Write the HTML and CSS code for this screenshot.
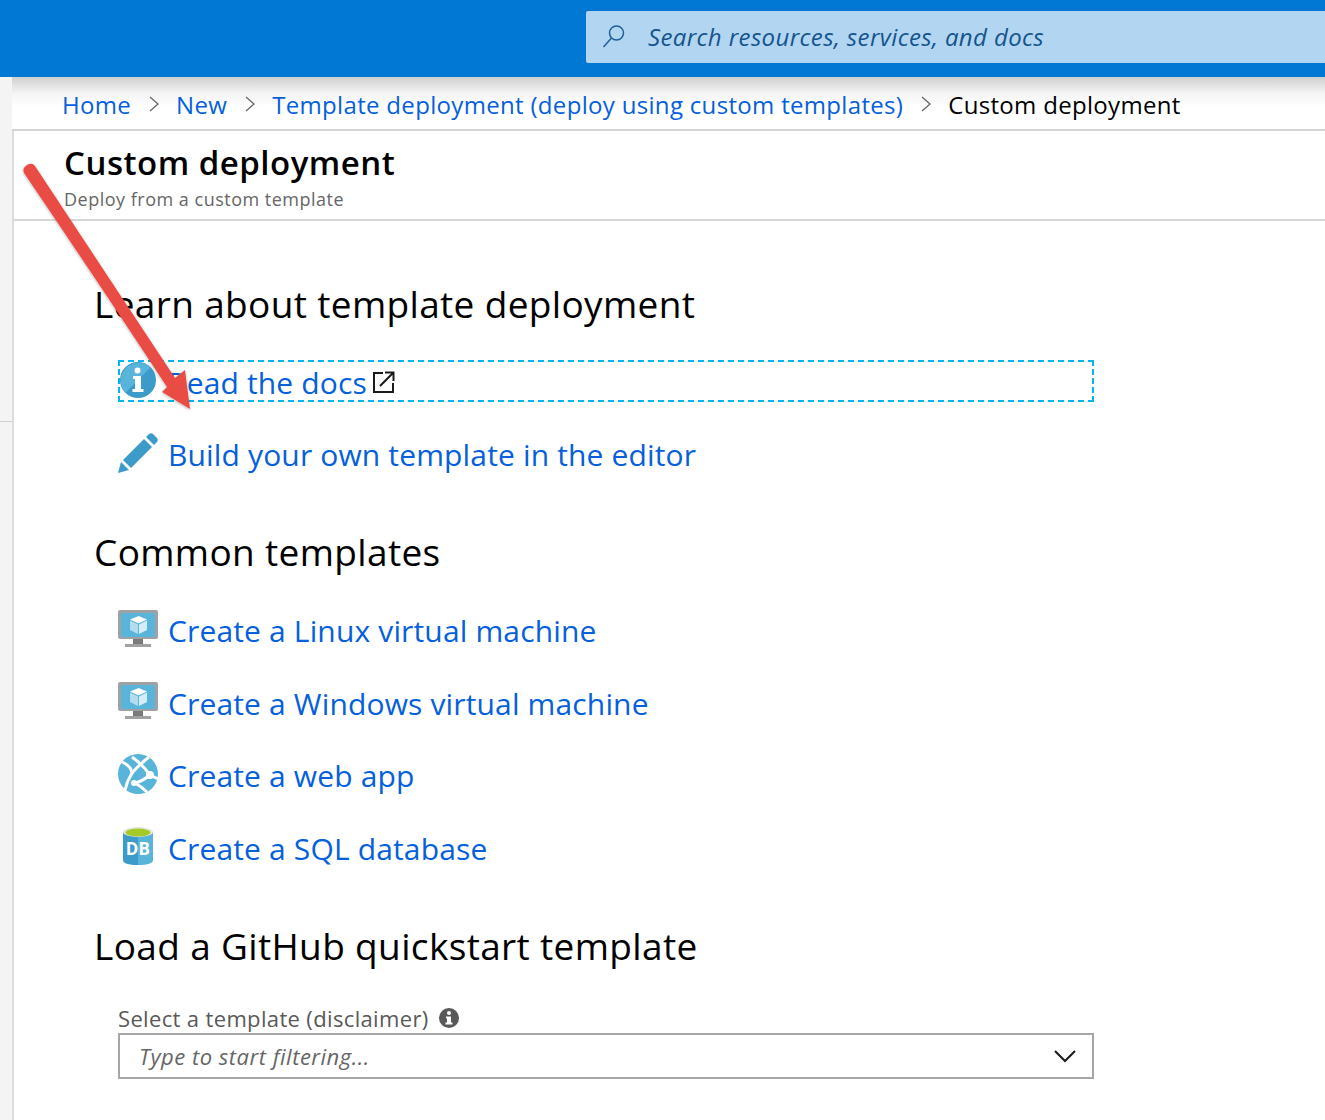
FILE: index.html
```html
<!DOCTYPE html>
<html lang="en">
<head>
    <meta charset="UTF-8">
    <meta name="viewport" content="width=device-width, initial-scale=1.0">
    <title>Custom deployment</title>
    <link rel="stylesheet" href="styles.css">
</head>
<body>
    <header class="topbar">
        <div class="search">
            <svg class="search-icon" width="26" height="26" viewBox="0 0 26 26">
                <circle cx="15.5" cy="10" r="7" fill="none" stroke="#1f5f96" stroke-width="1.5"/>
                <path d="M10.5 15 L2.5 24" fill="none" stroke="#1f5f96" stroke-width="1.5"/>
            </svg>
            <span class="search-text">Search resources, services, and docs</span>
        </div>
    </header>

    <div class="shell">
        <div class="gutter"><div class="gutter-top"></div></div>
        <div class="page">
            <nav class="crumbs">
                <a href="#">Home</a>
                <svg class="chev" width="12" height="18" viewBox="0 0 12 18"><path d="M2 2 L10 9 L2 16" fill="none" stroke="#666" stroke-width="1.3"/></svg>
                <a href="#">New</a>
                <svg class="chev" width="12" height="18" viewBox="0 0 12 18"><path d="M2 2 L10 9 L2 16" fill="none" stroke="#666" stroke-width="1.3"/></svg>
                <a href="#">Template deployment (deploy using custom templates)</a>
                <svg class="chev" width="12" height="18" viewBox="0 0 12 18"><path d="M2 2 L10 9 L2 16" fill="none" stroke="#666" stroke-width="1.3"/></svg>
                <span>Custom deployment</span>
            </nav>

            <div class="title-block">
                <h1>Custom deployment</h1>
                <p>Deploy from a custom template</p>
            </div>

            <main class="content">
                <h2 class="first">Learn about template deployment</h2>
                <a class="row focused" href="#">
                    <svg class="icon" width="40" height="40" viewBox="0 0 40 40">
                        <circle cx="20" cy="20" r="18" fill="#3d9bc9"/>
                        <path d="M7.3 32.7 A18 18 0 0 1 32.7 7.3 Z" fill="#59b4d9"/>
                        <circle cx="19.5" cy="10.5" r="3" fill="#fff"/>
                        <path d="M15 16 H23 V29 H25.5 V32 H14.5 V29 H17 V19 H15 Z" fill="#fff"/>
                    </svg>
                    <span>Read the docs</span>
                    <svg class="ext" width="24" height="24" viewBox="0 0 24 24">
                        <path d="M11 3 H2 V22 H21 V13" fill="none" stroke="#1a1a1a" stroke-width="2"/>
                        <path d="M8 16 L21 3 M13 2.5 H21.5 V11" fill="none" stroke="#1a1a1a" stroke-width="2"/>
                    </svg>
                </a>
                <a class="row" href="#">
                    <svg class="icon" width="40" height="40" viewBox="0 0 40 40">
                        <path d="M0 40 L3 29 L11 37 Z" fill="#3d9bc9"/>
                        <path d="M5 27 L26 6 L34 14 L13 35 Z" fill="#3d9bc9"/>
                        <path d="M28 4 L31 1 Q33 -0.5 35 1 L39 5 Q40.500 7 39 9 L36 12 Z" fill="#3d9bc9"/>
                    </svg>
                    <span>Build your own template in the editor</span>
                </a>

                <h2 class="common">Common templates</h2>
                <a class="row" href="#">
                    <svg class="icon" width="40" height="40" viewBox="0 0 40 40">
                        <rect y="1" width="40" height="29" rx="2" fill="#a0a1a2"/>
                        <rect x="3" y="4" width="34" height="24" fill="#59b4d9"/>
                        <rect x="15" y="30" width="10" height="5" fill="#7a7a7a"/>
                        <rect x="7" y="35" width="26" height="3" fill="#a0a1a2"/>
                        <path d="M20.500 7 L29 10.500 L20.500 14.500 L12 10.500 Z" fill="#fff"/>
                        <path d="M12 11.500 L20 15.500 V25 L12 21 Z" fill="#b3dcef"/>
                        <path d="M29 11.500 L21 15.500 V25 L29 21 Z" fill="#d5edf7"/>
                    </svg>
                    <span>Create a Linux virtual machine</span>
                </a>
                <a class="row" href="#">
                    <svg class="icon" width="40" height="40" viewBox="0 0 40 40">
                        <rect y="1" width="40" height="29" rx="2" fill="#a0a1a2"/>
                        <rect x="3" y="4" width="34" height="24" fill="#59b4d9"/>
                        <rect x="15" y="30" width="10" height="5" fill="#7a7a7a"/>
                        <rect x="7" y="35" width="26" height="3" fill="#a0a1a2"/>
                        <path d="M20.500 7 L29 10.500 L20.500 14.500 L12 10.500 Z" fill="#fff"/>
                        <path d="M12 11.500 L20 15.500 V25 L12 21 Z" fill="#b3dcef"/>
                        <path d="M29 11.500 L21 15.500 V25 L29 21 Z" fill="#d5edf7"/>
                    </svg>
                    <span>Create a Windows virtual machine</span>
                </a>
                <a class="row" href="#">
                    <svg class="icon" width="40" height="40" viewBox="0 0 40 40">
                        <circle cx="20" cy="20" r="20" fill="#59b4d9"/>
                        <g fill="none" stroke="#fff" stroke-width="3">
                            <path d="M4 8 Q13 12 14 19 Q9 27 7 36"/>
                            <path d="M14 19 Q22 10 31 3"/>
                            <path d="M14 3 Q25 11 32 21"/>
                            <path d="M32 21 Q25 27 17 29"/>
                            <path d="M17 29 Q24 33 29 38"/>
                            <path d="M32 21 L40 25"/>
                        </g>
                        <circle cx="32" cy="21" r="4" fill="#fff"/>
                        <circle cx="16" cy="29" r="3" fill="#fff"/>
                    </svg>
                    <span>Create a web app</span>
                </a>
                <a class="row" href="#">
                    <svg class="icon" width="40" height="40" viewBox="0 0 40 40">
                        <path d="M5 6 V34 Q5 39 20 39 V6 Z" fill="#3d9bc9"/>
                        <path d="M35 6 V34 Q35 39 20 39 V6 Z" fill="#59b4d9"/>
                        <ellipse cx="20" cy="6" rx="15" ry="5" fill="#e8e8e8"/>
                        <ellipse cx="20" cy="6.500" rx="12.500" ry="4" fill="#a5c925"/>
                        <text class="db" x="20" y="29" text-anchor="middle">DB</text>
                    </svg>
                    <span>Create a SQL database</span>
                </a>

                <h2 class="github">Load a GitHub quickstart template</h2>
                <div class="field-label">
                    <span>Select a template (disclaimer)</span>
                    <svg width="20" height="20" viewBox="0 0 20 20">
                        <circle cx="10" cy="10" r="10" fill="#595959"/>
                        <circle cx="10" cy="5" r="2" fill="#fff"/>
                        <path d="M7 8.500 H12 V14.500 H13.500 V16.500 H6.500 V14.500 H8 V10.500 H7 Z" fill="#fff"/>
                    </svg>
                </div>
                <div class="filter">
                    <span>Type to start filtering...</span>
                    <svg width="24" height="14" viewBox="0 0 24 14"><path d="M2 2 L12 12 L22 2" fill="none" stroke="#1a1a1a" stroke-width="2"/></svg>
                </div>
            </main>
        </div>
    </div>

    <!-- annotation drawn over the screenshot -->
    <svg class="arrow" width="200" height="270" viewBox="0 0 200 270">
        <defs>
            <filter id="arrowShadow" x="-10%" y="-10%" width="120%" height="120%">
                <feDropShadow dx="0" dy="1" stdDeviation="1.500" flood-color="#000" flood-opacity="0.3"/>
            </filter>
        </defs>
        <path filter="url(#arrowShadow)" fill="#e94c45" d="M22 5 Q27 2 30 6 L170 218 L180 210 L185 249 L157 232 L162 227 Q95 125 19 13 Q17 8 22 5 Z"/>
    </svg>
</body>
</html>
```

FILE: styles.css
```css
* {
    box-sizing: border-box;
}

html, body {
    margin: 0;
    padding: 0;
    height: 1120px;
    overflow: hidden;
}

body {
    position: relative;
    background: #fff;
    font-family: "Open Sans", "Noto Sans", sans-serif;
    color: #000;
}

a {
    color: #0560dc;
    text-decoration: none;
}

/* top bar */
.topbar {
    height: 77px;
    background: #0078d4;
    padding: 11px 0 14px 586px;
}

.search {
    display: flex;
    align-items: center;
    height: 52px;
    background: #b2d6f2;
    border-radius: 2px 0 0 2px;
    padding: 0 0 2px 15px;
}

.search-icon {
    margin-right: 21px;
}

.search-text {
    font-size: 24px;
    font-style: italic;
    color: #15548c;
    letter-spacing: 0.38px;
}

/* page frame */
.shell {
    display: flex;
    height: 1043px;
}

.gutter {
    width: 14px;
    flex-shrink: 0;
    background: #f4f4f4;
    border-right: 2px solid #dcdcdc;
}

.gutter-top {
    height: 345px;
    border-bottom: 1px solid #d0d0d0;
}

.page {
    flex: 1;
    min-width: 0;
}

.crumbs {
    display: flex;
    align-items: center;
    height: 54px;
    margin-left: -2px;
    padding: 2px 0 0 50px;
    background: linear-gradient(#cfcfcf 0, #f4f4f4 16px, #fff 30px);
    border-bottom: 2px solid #d4d4d4;
    font-size: 24px;
    letter-spacing: 0.32px;
}

.chev {
    margin: 0 16.5px;
}

.title-block {
    height: 90px;
    border-bottom: 2px solid #d8d8d8;
    padding: 10px 0 0 50px;
}

h1 {
    margin: 0;
    font-size: 33px;
    font-weight: 600;
    line-height: 44px;
    letter-spacing: 0.5px;
}

.title-block p {
    margin: 2px 0 0;
    font-size: 18px;
    line-height: 24px;
    color: #666;
    letter-spacing: 0.5px;
}

.content {
    padding-left: 80px;
    width: 1080px;
}

h2 {
    margin: 0;
    font-size: 37px;
    font-weight: 400;
    line-height: 50px;
    height: 50px;
    letter-spacing: 0.35px;
}

h2.first {
    margin-top: 58px;
    margin-bottom: 31px;
}

h2.common {
    margin-top: 52px;
    margin-bottom: 32px;
}

h2.github {
    margin-top: 53px;
    margin-bottom: 32px;
}

.row {
    display: flex;
    align-items: center;
    height: 42px;
    margin: 0 0 30.6px 24px;
    padding-top: 2px;
    font-size: 30px;
    letter-spacing: 0.15px;
}

.row .icon {
    flex-shrink: 0;
    margin: 0 10px 4px 0;
}

.row.focused {
    outline: 2px dashed #00b7f0;
    outline-offset: -2px;
}

.ext {
    margin-left: 5px;
}

.db {
    font-family: "Open Sans", sans-serif;
    font-size: 17px;
    font-weight: 700;
    fill: #fff;
}

.field-label {
    display: flex;
    align-items: center;
    gap: 10px;
    height: 30px;
    margin-left: 24px;
    font-size: 22px;
    letter-spacing: 0.35px;
    color: #595959;
}

.filter {
    display: flex;
    align-items: center;
    justify-content: space-between;
    height: 46px;
    margin-left: 24px;
    padding: 0 15px 0 19px;
    border: 2px solid #a6a6a6;
    font-size: 22px;
    font-style: italic;
    color: #666;
    letter-spacing: 0.5px;
}

/* red annotation arrow */
.arrow {
    position: absolute;
    left: 5px;
    top: 160px;
}
```
